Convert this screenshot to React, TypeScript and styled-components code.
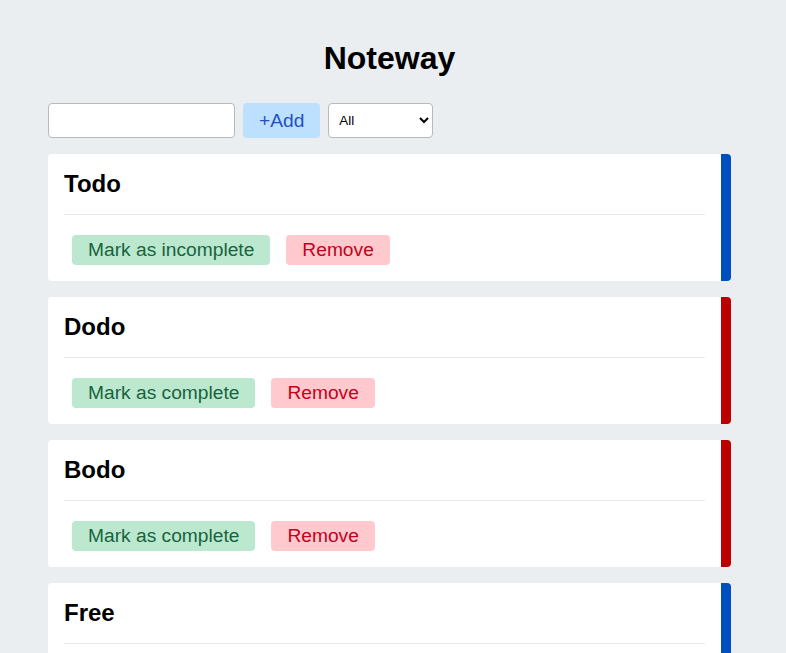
import React, { useState } from "react";
import styled, { createGlobalStyle } from "styled-components";

const GlobalStyle = createGlobalStyle`
  html, body {
    margin: 0;
    padding: 0;
    background: #ebeef1;
    font-family: "Liberation Sans", Arial, sans-serif;
    scrollbar-width: none;
  }
  body::-webkit-scrollbar { display: none; }
  * { box-sizing: border-box; }
`;

const Page = styled.main`
  width: 683px;
  margin-left: 48px;
  padding-top: 40px;
`;

const Title = styled.h1`
  margin: 0;
  font-size: 32px;
  font-weight: 700;
  line-height: normal;
  text-align: center;
  color: #000;
`;

const Toolbar = styled.div`
  display: flex;
  align-items: stretch;
  gap: 8px;
  margin-top: 26px;
  height: 35px;
`;

const TextInput = styled.input`
  width: 187px;
  height: 35px;
  border: 1px solid #b3bac2;
  border-radius: 4px;
  background: #fff;
  padding: 0 8px;
  font-family: "Liberation Sans", Arial, sans-serif;
  font-size: 16px;
`;

const AddButton = styled.button`
  height: 35px;
  padding: 0 16px;
  border: none;
  border-radius: 4px;
  background: #bde0fe;
  color: #1f4fc4;
  font-family: "Liberation Sans", Arial, sans-serif;
  font-size: 19.2px;
  cursor: pointer;
`;

const Filter = styled.select`
  width: 105px;
  height: 35px;
  border: 1px solid #b3bac2;
  border-radius: 4px;
  background: #fff;
  padding: 0 6px;
  font-family: "Liberation Sans", Arial, sans-serif;
  font-size: 13.33px;
  color: #000;
`;

const List = styled.div`
  display: flex;
  flex-direction: column;
  gap: 16px;
  margin-top: 16px;
`;

const Card = styled.div<{ $accent: string }>`
  background: #fff;
  border-radius: 4px;
  border-right: 10px solid ${(p) => p.$accent};
  padding: 16px;
`;

const CardHeader = styled.div`
  padding-bottom: 16px;
  border-bottom: 1px solid #e8ebee;
`;

const CardTitle = styled.h2`
  margin: 0;
  font-size: 24px;
  font-weight: 700;
  line-height: normal;
  color: #000;
`;

const Actions = styled.div`
  display: flex;
  gap: 16px;
  padding-left: 8px;
  margin-top: 20px;
`;

const ActionButton = styled.button<{ $variant: "ok" | "danger" }>`
  height: 30px;
  padding: 0 16px;
  border: none;
  border-radius: 4px;
  font-family: "Liberation Sans", Arial, sans-serif;
  font-size: 19.2px;
  cursor: pointer;
  background: ${(p) => (p.$variant === "ok" ? "#bce8d0" : "#ffc9ce")};
  color: ${(p) => (p.$variant === "ok" ? "#17643d" : "#c4001a")};
`;

type Note = { id: number; title: string; done: boolean };

const BLUE = "#004fbf";
const RED = "#bb0000";

export default function App() {
  const [notes, setNotes] = useState<Note[]>([
    { id: 1, title: "Todo", done: true },
    { id: 2, title: "Dodo", done: false },
    { id: 3, title: "Bodo", done: false },
    { id: 4, title: "Free", done: true },
  ]);
  const [text, setText] = useState("");

  return (
    <>
      <GlobalStyle />
      <Page>
        <Title>Noteway</Title>
        <Toolbar>
          <TextInput value={text} onChange={(e) => setText(e.target.value)} />
          <AddButton
            onClick={() => {
              if (!text.trim()) return;
              setNotes((n) => [...n, { id: Date.now(), title: text, done: false }]);
              setText("");
            }}
          >
            +Add
          </AddButton>
          <Filter defaultValue="all">
            <option value="all">All</option>
            <option value="done">Complete</option>
            <option value="open">Incomplete</option>
          </Filter>
        </Toolbar>
        <List>
          {notes.map((n) => (
            <Card key={n.id} $accent={n.done ? BLUE : RED}>
              <CardHeader>
                <CardTitle>{n.title}</CardTitle>
              </CardHeader>
              <Actions>
                <ActionButton
                  $variant="ok"
                  onClick={() =>
                    setNotes((all) => all.map((x) => (x.id === n.id ? { ...x, done: !x.done } : x)))
                  }
                >
                  {n.done ? "Mark as incomplete" : "Mark as complete"}
                </ActionButton>
                <ActionButton
                  $variant="danger"
                  onClick={() => setNotes((all) => all.filter((x) => x.id !== n.id))}
                >
                  Remove
                </ActionButton>
              </Actions>
            </Card>
          ))}
        </List>
      </Page>
    </>
  );
}
